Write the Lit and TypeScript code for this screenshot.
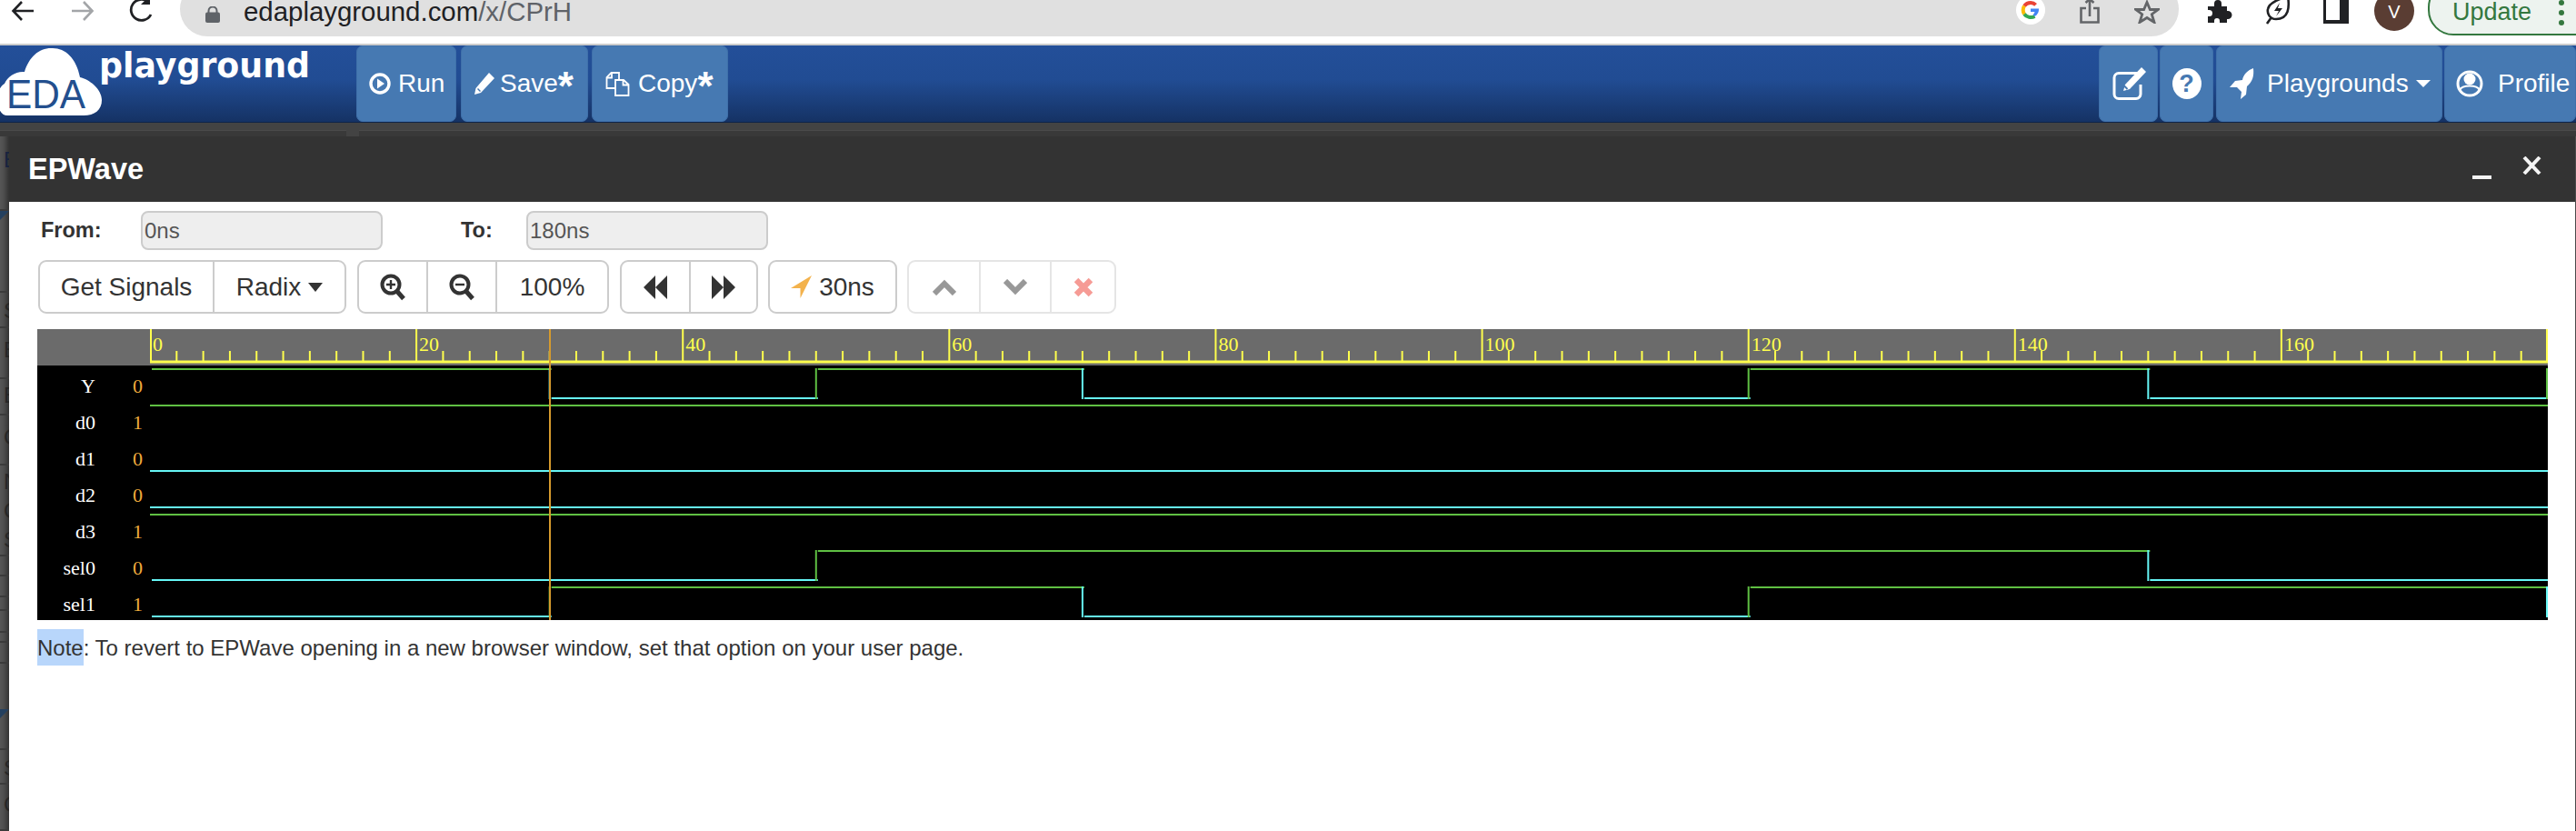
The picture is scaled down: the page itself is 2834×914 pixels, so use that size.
import { LitElement, html, css, svg } from "lit";
import { customElement } from "lit/decorators.js";

const X0 = 165;
const XE = 2803;
const PX = (XE - X0) / 180;
const xt = (t: number) => X0 + t * PX;
const GREEN = "#5fc043";
const CYAN = "#66f6f6";

type Sig = { name: string; val: string; init: number; edges: number[] };
const SIGNALS: Sig[] = [
  { name: "Y", val: "0", init: 1, edges: [30, 50, 70, 120, 150, 180] },
  { name: "d0", val: "1", init: 1, edges: [] },
  { name: "d1", val: "0", init: 0, edges: [] },
  { name: "d2", val: "0", init: 0, edges: [] },
  { name: "d3", val: "1", init: 1, edges: [] },
  { name: "sel0", val: "0", init: 0, edges: [50, 150] },
  { name: "sel1", val: "1", init: 0, edges: [30, 70, 120, 180] },
];

const STRIP = [
  { h: 82, l: "E", c: "#18233f", p: 10 },
  { h: 90, l: "", tri: true },
  { h: 39, l: "S", p: 4 },
  { h: 56, l: "B", p: 8 },
  { h: 40, l: "B", p: 2 },
  { h: 55, l: "C", p: 8 },
  { h: 100, l: "N\nC\nS", p: 2 },
  { h: 22, l: "" },
  { h: 23, l: "" },
  { h: 15, l: "" },
  { h: 24, l: "" },
  { h: 11, l: "" },
  { h: 23, l: "" },
  { h: 95, l: "", tri: true, top: 50 },
  { h: 38, l: "S", p: 4 },
  { h: 51, l: "C", p: 6 },
];

function waveLines(s: Sig, n: number) {
  const hi = 406 + 40 * n;
  const lo = 438 + 40 * n;
  const out: unknown[] = [];
  let level = s.init;
  let from = s.edges.length ? 167 : X0;
  const pts = [...s.edges];
  for (const e of pts) {
    const x = xt(e);
    const y = level ? hi : lo;
    out.push(svg`<line x1=${from} x2=${Math.min(x + 2, XE)} y1=${y} y2=${y} stroke=${level ? GREEN : CYAN} stroke-width="2"/>`);
    const next = level ? 0 : 1;
    const vx = Math.min(x, XE - 1);
    out.push(svg`<line x1=${vx} x2=${vx} y1=${hi - 1} y2=${lo + 1} stroke=${next ? GREEN : CYAN} stroke-width="2"/>`);
    level = next;
    from = x + 2;
  }
  if (!pts.length || pts[pts.length - 1] < 180) {
    const y = level ? hi : lo;
    out.push(svg`<line x1=${from} x2=${XE} y1=${y} y2=${y} stroke=${level ? GREEN : CYAN} stroke-width="2"/>`);
  }
  return out;
}

function wave() {
  const ticks: unknown[] = [];
  for (let t = 0; t <= 180; t += 2) {
    const x = xt(t);
    const major = t % 20 === 0;
    const px = t === 180 ? XE - 1 : t === 0 ? X0 + 1 : x;
    ticks.push(svg`<line x1=${px} x2=${px} y1=${major ? 362 : 386} y2="398" stroke="#ffff4d" stroke-width="2"/>`);
    if (major && t < 180) ticks.push(svg`<text class="rt" x=${x + 3} y="386">${t}</text>`);
  }
  return html`<svg class="wave" width="2762" height="320" viewBox="41 362 2762 320">
    <rect x="41" y="362" width="2762" height="40" fill="#6b6b6b"/>
    <rect x="41" y="402" width="2762" height="280" fill="#000"/>
    <line x1=${X0} x2=${XE} y1="398" y2="398" stroke="#ffff4d" stroke-width="3"/>
    ${ticks}
    ${SIGNALS.map(
      (s, n) => svg`
      <text class="sn" x="105" y=${432 + 40 * n}>${s.name}</text>
      <text class="sv" x="157" y=${432 + 40 * n}>${s.val}</text>
      ${waveLines(s, n)}`
    )}
    <line x1="605" x2="605" y1="362" y2="682" stroke="#d69a2d" stroke-width="2"/>
  </svg>`;
}

const I = {
  back: html`<svg width="26" height="24" viewBox="0 0 26 24" fill="none" stroke="#202124" stroke-width="2.6"><path d="M25 12H3M12 2 2.5 12 12 22"/></svg>`,
  fwd: html`<svg width="26" height="24" viewBox="0 0 26 24" fill="none" stroke="#a3a5a8" stroke-width="2.6"><path d="M1 12h22M14 2l9.5 10L14 22"/></svg>`,
  reload: html`<svg width="28" height="26" viewBox="0 0 28 26" fill="none" stroke="#202124" stroke-width="2.8"><path d="M24 17a11.5 11.5 0 1 1-3-14"/><path d="M23 -4v10h-10" fill="#202124" stroke="none"/></svg>`,
  lock: html`<svg width="16" height="18" viewBox="0 0 16 18"><path d="M3.5 7V5a4.500 4.500 0 0 1 9 0v2" fill="none" stroke="#5f6368" stroke-width="2"/><rect y="6.500" width="16" height="11.500" rx="2" fill="#5f6368"/></svg>`,
  g: html`<svg width="32" height="28" viewBox="0 0 32 28"><circle cx="16" cy="11" r="16" fill="#fff"/><path d="M16 3a8 8 0 0 1 5.600 2.300" stroke="#ea4335" stroke-width="4" fill="none"/><path d="M9 6.500A9 9 0 0 1 16 3" stroke="#ea4335" stroke-width="4" fill="none"/><path d="M9 6.500a9 9 0 0 0 0 9" stroke="#fbbc05" stroke-width="4" fill="none"/><path d="M9 15.500a9 9 0 0 0 11.500 2.500" stroke="#34a853" stroke-width="4" fill="none"/><path d="M16 9.500h9a9 9 0 0 1-4.500 8.500l-2-2a4 4 0 0 0 2-3H16z" fill="#4285f4"/></svg>`,
  share: html`<svg width="22" height="26" viewBox="0 0 22 26" fill="none" stroke="#636568" stroke-width="2.6"><path d="M7 9H1.500v15.500h19V9H15M11 18V0M6.500 3 11 -1l4.500 4"/></svg>`,
  star: html`<svg width="28" height="26" viewBox="0 0 28 26" fill="none" stroke="#636568" stroke-width="2.800"><path d="M14 2.500l3.400 8h9L19.300 15.700 22 24.500 14 19.500 6 24.500 8.700 15.700 1.600 10.500h9z"/></svg>`,
  puzzle: html`<svg width="29" height="25" viewBox="0 0 29 25" fill="#202124"><path d="M1 7h7V4a4 4 0 0 1 8 0v3h6v5h1a4.500 4.500 0 0 1 0 9h-1v4H14v-2a3 3 0 0 0-6 0v2H1v-7h1.500a3.500 3.500 0 0 0 0-7H1z"/></svg>`,
  leaf: html`<svg width="28" height="27" viewBox="0 0 28 27" fill="none" stroke="#202124" stroke-width="2.600"><path d="M25 -4C27 8 26 21 12 21 5 21 2 15 3 10 4 4 11 0 25 -4zM7 19l-5 7"/><path d="M16 3l-6 9h5l-3 6 7-9h-5z" fill="#202124" stroke="none"/></svg>`,
  panel: html`<svg width="28" height="26" viewBox="0 0 28 26"><rect width="28" height="26" fill="#202124"/><rect x="3" y="-2" width="15" height="24" fill="#fff"/></svg>`,
  play: html`<svg width="24" height="24" viewBox="0 0 24 24"><circle cx="12" cy="12" r="10" fill="none" stroke="#fff" stroke-width="3.400"/><path d="M9 6.500l8 5.500-8 5.500z" fill="#fff"/></svg>`,
  pencil: html`<svg width="24" height="26" viewBox="0 0 24 26" fill="#fff"><path d="M17 1l6 6-15 16-7 2 1.500-7zM4 19l3 3 1-1-3-3z" fill-rule="evenodd"/></svg>`,
  copy: html`<svg width="27" height="27" viewBox="0 0 27 27" fill="none" stroke="#fff" stroke-width="1.800"><path d="M11 18H1.500V6L6.500 1H15v8"/><path d="M1.500 6.500h5.500V1"/><path d="M11 9h9l5.500 5v12H11zM19.500 9v5.500h6"/></svg>`,
  edit: html`<svg width="38" height="38" viewBox="0 0 38 38"><path d="M27 7.500H7a5 5 0 0 0-5 5v18a5 5 0 0 0 5 5h19a5 5 0 0 0 5-5V20" fill="none" stroke="#fff" stroke-width="3"/><path d="M32 1l5 5-18 19-7 2 2-7z" fill="#fff"/><path d="M13 21.500l3.500 3.500" stroke="#4679b2" stroke-width="2"/></svg>`,
  rocket: html`<svg width="27" height="34" viewBox="0 0 27 34" fill="#fff"><path d="M26 0c1 9-1 15-7 20l-1 9-6 5 1-8-5-5-8 0 6-7 8-1C15 7 20 2 26 0z"/></svg>`,
  user: html`<svg width="30" height="34" viewBox="0 0 30 34"><circle cx="15" cy="17" r="13" fill="none" stroke="#fff" stroke-width="3"/><circle cx="15" cy="12" r="6.500" fill="#fff"/><path d="M4 24c3-6 19-6 22 0-3 8-19 8-22 0z" fill="none" stroke="#fff" stroke-width="2"/></svg>`,
  zoomIn: html`<svg width="28" height="30" viewBox="0 0 28 30" fill="none" stroke="#333"><circle cx="12" cy="12" r="9.500" stroke-width="4"/><path d="M18.500 19l7.500 8.500" stroke-width="5"/><path d="M7 12h10M12 7v10" stroke-width="2.400"/></svg>`,
  zoomOut: html`<svg width="28" height="30" viewBox="0 0 28 30" fill="none" stroke="#333"><circle cx="12" cy="12" r="9.500" stroke-width="4"/><path d="M18.500 19l7.500 8.500" stroke-width="5"/><path d="M7 12h10" stroke-width="2.400"/></svg>`,
  rew: html`<svg width="26" height="26" viewBox="0 0 26 26" fill="#333"><path d="M13 0v26L0 13zM26 0v26L13 13z"/></svg>`,
  ff: html`<svg width="26" height="26" viewBox="0 0 26 26" fill="#333"><path d="M0 0v26l13-13zM13 0v26l13-13z"/></svg>`,
  loc: html`<svg width="23" height="25" viewBox="0 0 23 25"><path d="M23 0 10.500 25V14H0z" fill="#f3b24c"/></svg>`,
  up: html`<svg width="26" height="18" viewBox="0 0 26 18" fill="none" stroke="#333" stroke-width="6"><path d="M2 16 13 5l11 11"/></svg>`,
  down: html`<svg width="26" height="18" viewBox="0 0 26 18" fill="none" stroke="#333" stroke-width="6"><path d="M2 2l11 11L24 2"/></svg>`,
  times: html`<svg width="20" height="22" viewBox="0 0 20 22" fill="none" stroke="#ee3a2e" stroke-width="6.500"><path d="M2 3l16 16M18 3 2 19"/></svg>`,
  min: html`<svg width="21" height="6" viewBox="0 0 21 6"><rect y="1" width="21" height="4" fill="#f4f4f4"/></svg>`,
  close: html`<svg width="21" height="20" viewBox="0 0 21 20" fill="none" stroke="#f4f4f4" stroke-width="4"><path d="M2 1l17 18M19 1 2 19"/></svg>`,
};

@customElement("app-root")
export class AppRoot extends LitElement {
  static styles = css`
    :host { display: block; width: 2834px; height: 914px; overflow: hidden; font-family: "Liberation Sans", Arial, sans-serif; color: #333; background: #fff; }
    .chrome { height: 48px; border-bottom: 2px solid #ccc; background: #fff; display: flex; overflow: hidden; }
    .navicons { width: 198px; flex: none; display: flex; padding-left: 12px; gap: 40px; box-sizing: border-box; }
    .navicons svg:nth-child(3) { margin-top: -1px; margin-left: -2px; }
    .omni { width: 2199px; flex: none; height: 60px; margin-top: -20px; border-radius: 30px; background: #e0e0e0; display: flex; align-items: center; padding: 0 21px 0 28px; box-sizing: border-box; }
    .lockw { margin-top: 12px; display: flex; }
    .url { margin-left: 26px; font-size: 29.4px; color: #202124; white-space: nowrap; flex: 1; padding-top: 5px; }
    .url span { color: #5f6368; }
    .omni-i { display: flex; align-items: flex-start; gap: 38px; margin-top: 20px; height: 40px; }
    .ext { flex: 1; display: flex; position: relative; }
    .ext-row { display: flex; align-items: flex-start; margin-left: 31px; }
    .ext-row > svg { flex: none; }
    .ext-row > svg:nth-child(1) { margin-right: 35px; }
    .ext-row > svg:nth-child(2) { margin-right: 36px; }
    .ext-row > svg:nth-child(3) { margin-right: 28px; }
    .avatar { width: 44px; height: 44px; flex: none; margin-top: -10px; border-radius: 50%; background: #5a3d33; color: #fff; font-size: 20px; display: flex; align-items: center; justify-content: center; padding-top: 2px; box-sizing: border-box; margin-right: 15px; }
    .update { width: 200px; flex: none; height: 59px; margin-top: -20px; box-sizing: border-box; border: 2px solid #34783f; border-radius: 28px; background: #edf3ef; color: #34783f; font-size: 27px; padding: 16px 0 0 25px; }
    .dots { position: absolute; left: 418px; top: 0; display: flex; flex-direction: column; gap: 5px; }
    .dots i { width: 6px; height: 6px; border-radius: 50%; background: #34783f; }

    .nav { height: 84px; border-bottom: 1px solid #0e2448; background: linear-gradient(#234f99, #214c93 45%, #153264); display: flex; }
    .logo { width: 392px; flex: none; display: flex; }
    .logo svg { display: block; }
    .btn { height: 84px; box-sizing: border-box; background: #4679b2; border: 1px solid #3f70aa; border-radius: 7px; color: #fff; font-size: 28px; display: flex; align-items: center; flex: none; overflow: hidden; white-space: nowrap; }
    .btn svg { flex: none; }
    .ast { font-weight: bold; font-size: 44px; line-height: 1; align-self: flex-start; margin-top: 22px; }
    .spacer { flex: 1; }
    .caret { width: 0; height: 0; border-left: 8px solid transparent; border-right: 8px solid transparent; border-top: 8px solid #fff; flex: none; }
    .run { width: 110px; padding-left: 13px; gap: 8px; margin-right: 5px; }
    .save { width: 140px; padding-left: 13px; gap: 5px; margin-right: 4px; }
    .save .ast { margin-left: -5px; }
    .copy { width: 150px; padding-left: 14px; gap: 9px; }
    .copy .ast { margin-left: -9px; }
    .edit { width: 65px; padding-left: 14px; margin-right: 2px; }
    .help { width: 59px; justify-content: center; margin-right: 3px; }
    .pg { width: 249px; padding-left: 14px; margin-right: 2px; }
    .pg .t { margin: 0 8px 0 14px; }
    .prof { width: 145px; padding-left: 12px; gap: 16px; }
    .q { width: 32px; height: 34px; border-radius: 50%; background: #fff; color: #4679b2; font-weight: bold; font-size: 27px; display: flex; align-items: center; justify-content: center; }

    .band { height: 15px; background: #434343; display: flex; align-items: flex-end; gap: 14px; }
    .band i { height: 7px; background: #393939; border-top: 1px solid #4a4a4a; box-sizing: border-box; display: block; }
    .band i:first-child { width: 381px; flex: none; }
    .band i:last-child { flex: 1; }

    .body { display: flex; height: 764px; }
    .strip { width: 10px; flex: none; background: linear-gradient(90deg, #565656, #4e4e4e 40%, #333); overflow: hidden; }
    .sr { box-sizing: border-box; border-bottom: 2px solid #3b3b3b; overflow: hidden; font-size: 24px; line-height: 32px; color: #262626; padding-left: 4px; white-space: pre; }
    .tri { display: block; margin-left: -4px; }
    .modal { flex: 1; background: #fff; display: flex; flex-direction: column; }
    .edge { width: 1px; flex: none; background: #4a4a4a; }
    .mh { height: 72px; flex: none; background: #333; display: flex; align-items: center; padding-left: 21px; color: #fff; box-sizing: border-box; }
    .mh h1 { margin: 0; font-size: 32.500px; font-weight: bold; flex: 1; }
    .minb { margin-top: 17px; margin-right: 34px; display: flex; }
    .closeb { margin-right: 37px; margin-top: -9px; display: flex; }
    .mb { padding: 10px 0 0 31px; display: flex; flex-direction: column; }
    .range { display: flex; align-items: center; height: 43px; margin-bottom: 11px; }
    .range label { font-weight: bold; font-size: 23.500px; }
    .l1 { width: 114px; padding-left: 4px; box-sizing: border-box; }
    .l2 { width: 72px; }
    .inp { width: 266px; height: 43px; box-sizing: border-box; background: #eee; border: 2px solid #ccc; border-radius: 8px; font-size: 24px; color: #555; padding-left: 2px; display: flex; align-items: center; }
    .gap1 { width: 86px; flex: none; }
    .bar { display: flex; height: 59px; margin-left: 1px; margin-bottom: 17px; }
    .grp { display: flex; border: 2px solid #ccc; border-radius: 9px; box-sizing: border-box; height: 59px; background: #fff; }
    .cell { display: flex; align-items: center; justify-content: center; font-size: 28px; color: #333; box-sizing: border-box; border-left: 2px solid #ccc; white-space: nowrap; }
    .cell:first-child { border-left: 0; }
    .dim { opacity: 0.5; }
    .dcaret { width: 0; height: 0; margin-left: 8px; border-left: 8px solid transparent; border-right: 8px solid transparent; border-top: 10px solid #333; }
    .wave { display: block; }
    .rt { font: 22px "Liberation Serif", serif; fill: #ffff4d; }
    .sn { font: 22px "Liberation Serif", serif; fill: #fff; text-anchor: end; }
    .sv { font: 22px "Liberation Serif", serif; fill: #f0ab3c; text-anchor: end; }
    .note { margin-top: 10px; font-size: 24px; line-height: 42px; color: #333; white-space: nowrap; }
    .note mark { display: inline-block; height: 40px; background: #b8d6fb; color: #333; }
  `;

  private cell(w: number, content: unknown) {
    return html`<div class="cell" style="width:${w}px">${content}</div>`;
  }

  render() {
    return html`
      <div class="chrome">
        <div class="navicons">${I.back}${I.fwd}${I.reload}</div>
        <div class="omni">
          <span class="lockw">${I.lock}</span>
          <div class="url">edaplayground.com<span>/x/CPrH</span></div>
          <div class="omni-i">${I.g}${I.share}${I.star}</div>
        </div>
        <div class="ext">
          <div class="ext-row">
            ${I.puzzle}${I.leaf}${I.panel}
            <div class="avatar">V</div>
            <div class="update">Update</div>
          </div>
          <div class="dots"><i></i><i></i><i></i></div>
        </div>
      </div>
      <div class="nav">
        <div class="logo">
          <svg width="345" height="84" viewBox="0 50 345 84">
            <path d="M8 127C-4 127-8 100 5 92 8 84 18 78 27 79 32 62 44 52 58 53 72 53 84 64 88 85 98 87 112 98 112 110 112 121 104 127 92 127Z" fill="#fff"/>
            <text x="7" y="119" font-family="Liberation Sans, sans-serif" font-size="44" fill="#234f8e" textLength="87" lengthAdjust="spacingAndGlyphs">EDA</text>
            <text x="109" y="85" font-family="DejaVu Sans, sans-serif" font-weight="bold" font-size="37" fill="#fff" textLength="232" lengthAdjust="spacingAndGlyphs">playground</text>
          </svg>
        </div>
        <div class="btn run">${I.play}<span>Run</span></div>
        <div class="btn save">${I.pencil}<span>Save</span><span class="ast">*</span></div>
        <div class="btn copy">${I.copy}<span>Copy</span><span class="ast">*</span></div>
        <div class="spacer"></div>
        <div class="btn edit">${I.edit}</div>
        <div class="btn help"><div class="q">?</div></div>
        <div class="btn pg">${I.rocket}<span class="t">Playgrounds</span><span class="caret"></span></div>
        <div class="btn prof">${I.user}<span>Profile</span><span class="caret"></span></div>
      </div>
      <div class="band"><i></i><i></i></div>
      <div class="body">
        <div class="strip">
          ${STRIP.map(
            (r) => html`<div class="sr" style="height:${r.h}px;padding-top:${r.p ?? 0}px">${r.tri
              ? html`<svg class="tri" width="10" height="10" viewBox="0 0 10 10" style="margin-top:${r.top ?? 0}px"><path d="M0 0h10L0 10z" fill="#24405f"/></svg>`
              : ""}${r.c ? html`<span style="color:${r.c}">${r.l}</span>` : r.l}</div>`
          )}
        </div>
        <div class="modal">
          <div class="mh">
            <h1>EPWave</h1>
            <span class="minb">${I.min}</span>
            <span class="closeb">${I.close}</span>
          </div>
          <div class="mb">
            <div class="range">
              <label class="l1">From:</label>
              <div class="inp">0ns</div>
              <div class="gap1"></div>
              <label class="l2">To:</label>
              <div class="inp">180ns</div>
            </div>
            <div class="bar">
              <div class="grp">
                ${this.cell(190, "Get Signals")}
                ${this.cell(145, html`Radix<span class="dcaret"></span>`)}
              </div>
              <div class="grp" style="margin-left:12px">
                ${this.cell(74, I.zoomIn)}
                ${this.cell(76, I.zoomOut)}
                ${this.cell(123, "100%")}
              </div>
              <div class="grp" style="margin-left:12px">
                ${this.cell(74, I.rew)}
                ${this.cell(74, I.ff)}
              </div>
              <div class="grp" style="margin-left:11px">
                ${this.cell(138, html`${I.loc}<span style="margin-left:8px">30ns</span>`)}
              </div>
              <div class="grp dim" style="margin-left:11px">
                ${this.cell(77, I.up)}
                ${this.cell(78, I.down)}
                ${this.cell(71, I.times)}
              </div>
            </div>
            ${wave()}
            <div class="note"><mark>Note</mark>: To revert to EPWave opening in a new browser window, set that option on your user page.</div>
          </div>
        </div>
        <div class="edge"></div>
      </div>
    `;
  }
}
